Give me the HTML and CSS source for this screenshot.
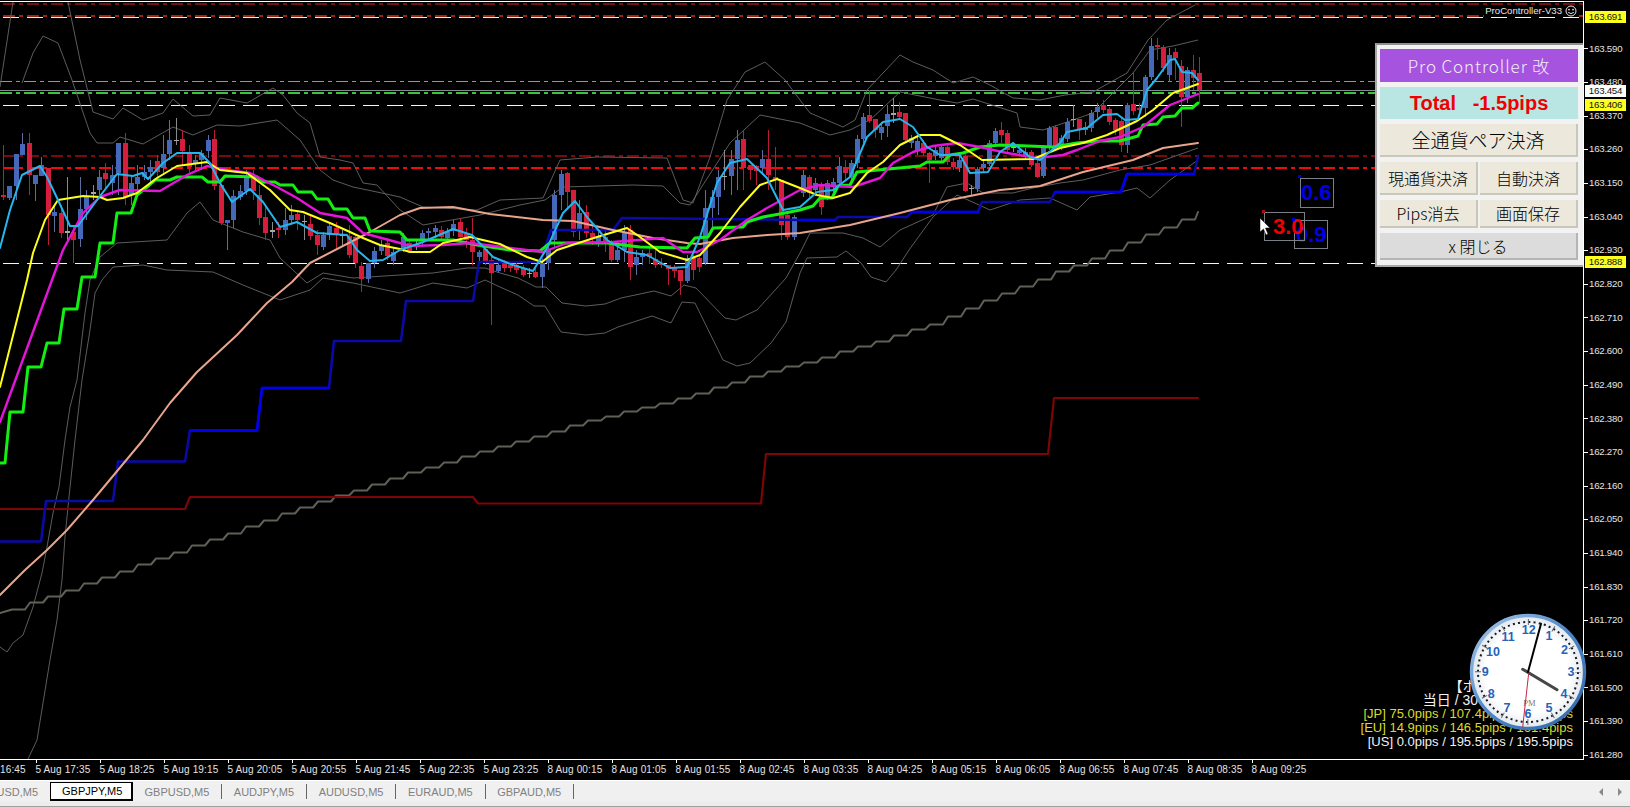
FILE: index.html
```html
<!DOCTYPE html>
<html lang="ja">
<head>
<meta charset="utf-8">
<title>GBPJPY,M5</title>
<link rel="stylesheet" href="styles.css">
</head>
<body>
<div class="terminal">
  <div class="workspace">
    <div class="plot">
      <svg class="chart" viewBox="0 2 1583 757" width="1583" height="757" xmlns="http://www.w3.org/2000/svg">
        <g>
          <line class="lv lv-darkred-top" x1="3" y1="4" x2="1583" y2="4"/>
          <line class="lv lv-red-top" x1="3" y1="16" x2="1583" y2="16"/>
          <line class="lv lv-white" x1="3" y1="17.5" x2="1583" y2="17.5"/>
          <line class="lv lv-palegreen" x1="0" y1="81.5" x2="1583" y2="81.5"/>
          <line class="lv lv-bid" x1="0" y1="90.5" x2="1583" y2="90.5"/>
          <line class="lv lv-green" x1="0" y1="93" x2="1583" y2="93"/>
          <line class="lv lv-white" x1="3" y1="105.5" x2="1583" y2="105.5"/>
          <line class="lv lv-darkred" x1="3" y1="156" x2="1583" y2="156"/>
          <line class="lv lv-red" x1="3" y1="168" x2="1583" y2="168"/>
          <line class="lv lv-white" x1="3" y1="263.5" x2="1583" y2="263.5"/>
        </g>
        <g class="bands">
          <polyline points="0,87 13,2"/>
          <polyline points="68,2 80,60 93,112 113,119 123,108 143,120 163,113 173,99 193,116 210,115 220,98 247,103 273,88 283,95 297,113 310,123 320,157 340,160 353,163 363,183 377,185 400,210 423,225 480,215 520,205 545,200 563,187 633,185 663,186 680,203 690,205 730,143 760,115 800,123 830,135 850,130 870,120 900,92 940,100 957,103 973,99 1017,113 1020,127 1043,130 1067,122 1093,113 1133,73 1150,50 1173,46 1198,40"/>
          <polyline points="22,83 33,53 43,36 58,43 72,80 90,133 97,143 113,143 120,137 143,144 173,127 193,135 217,125 240,126 277,120 300,140 320,170 333,180 353,187 377,192 400,197 423,207 477,210 500,200 543,198 560,160 597,157 667,158 683,200 693,203 710,157 727,100 745,72 765,62 785,80 800,100 810,113 843,127 855,120 867,90 900,55 913,62 933,70 953,83 973,77 990,85 1013,98 1040,100 1065,95 1093,92 1127,73 1148,40 1167,20 1195,5"/>
          <polyline points="0,647 7,652 13,643 23,635 33,607 42,573 47,547 53,513 59,487 65,440 70,407 77,380 85,313 90,280 100,257 117,243 167,240 187,213 200,202 213,220 243,232 270,240 280,258 307,283 323,273 353,278 400,275 433,273 467,268 485,268 500,273 518,278 536,287 546,287 562,303 586,306 605,304 621,298 654,291 671,296 684,285 696,288 725,318 736,320 757,310 786,278 800,253 810,233 843,233 863,238 880,247 900,230 933,215 947,187 967,183 983,193 1013,193 1033,188 1060,183 1083,180 1120,170 1150,165 1198,148"/>
          <polyline points="28,759 37,740 43,703 50,660 57,620 62,580 65,537 69,497 75,440 82,380 90,330 95,293 102,280 113,267 143,265 167,270 213,272 243,285 280,300 310,290 323,278 353,283 400,293 433,283 467,288 485,280 500,287 518,295 534,306 545,306 561,332 586,335 605,333 618,327 652,316 671,323 682,302 695,303 723,360 737,366 750,363 771,343 786,322 800,273 807,258 837,257 846,251 861,263 871,277 886,282 896,270 909,250 933,217 957,195 990,210 1020,200 1050,198 1077,210 1090,197 1120,192 1137,188 1150,198 1170,180 1198,160"/>
        </g>
        <g id="candles"></g>
        <polyline id="stairs" class="ma ma-stairs" points=""/>
        <polyline class="ma ma-darkred" points="0,509 185,509 190,497 473,497 478,503.5 761,503.5 766,454 1048,454 1054,398 1198,398"/>
        <polyline class="ma ma-blue" points="0,541.5 41,541.5 46,501 113,501 118,461.5 185,461.5 190,430.5 257,430.5 262,388 329,388 334,341 401,341 406,301 473,301 479,262 540,262 551,230 613,230 622,218 800,220 835,220 838,217 907,217 912,212 978,212 982,202 1050,202 1055,192 1121,192 1127,174 1194,174 1198,157"/>
        <polyline class="ma ma-blue-bright" points="190,430.5 257,430.5 262,388 329,388"/>
        <polyline class="ma ma-blue-bright" points="800,220 835,220"/>
        <polyline class="ma ma-blue-bright" points="912,212 978,212"/>
        <polyline class="ma ma-blue-bright" points="1055,192 1121,192 1127,174 1194,174"/>
        <polyline class="ma ma-peach" points="0,595 25,570 47,550 67,530 93,500 118,470 143,440 170,403 197,372 237,335 267,303 292,282 310,263 370,232 400,215 420,208 453,207 490,214 543,220 573,221 613,230 653,238 687,243 700,244 733,238 767,235 800,233 850,225 900,213 950,200 1000,190 1040,186 1083,172 1133,160 1163,148 1198,143"/>
        <polyline class="ma ma-lime" points="0,463 5,463 10,412 23,412 28,367 41,367 47,343 59,343 64,309 77,309 82,277 95,277 100,243 113,243 117,213 131,213 137,195 147,187 155,180 170,180 177,177 202,177 208,182 220,182 225,176 257,177 263,182 275,182 280,185 293,185 298,192 312,192 317,199 328,199 334,209 347,209 353,218 365,218 370,231 400,232 407,240 453,240 477,245 510,250 540,251 550,243 590,243 607,243 640,247 687,248 695,238 708,237 713,228 743,227 747,222 763,217 785,213 800,210 813,206 820,198 832,198 838,186 850,185 857,172 920,166 927,162 943,162 950,155 963,153 980,147 1000,145 1053,147 1077,143 1100,141 1120,141 1138,136 1143,125 1157,124 1163,117 1175,116 1182,108 1192,108 1198,103"/>
        <polyline class="ma ma-magenta" points="0,422 52,280 63,250 83,213 100,197 120,190 160,191 187,175 207,166 227,170 250,173 277,187 297,198 320,213 347,218 363,233 400,243 410,246 443,245 470,243 503,247 543,252 567,243 613,242 663,238 683,252 697,252 720,240 747,220 767,208 800,190 820,185 853,187 880,178 893,163 913,152 933,146 957,143 980,147 1007,153 1037,158 1063,155 1077,150 1100,141 1120,137 1143,127 1170,105 1198,94"/>
        <polyline class="ma ma-yellow" points="0,387 27,280 33,253 45,220 58,200 83,196 100,197 107,200 123,198 137,193 157,178 177,166 207,162 220,170 247,173 270,190 290,210 303,212 330,223 350,232 363,238 380,245 400,249 410,252 430,252 443,243 470,237 500,244 527,257 542,262 557,250 597,237 627,228 640,237 660,252 687,260 700,255 720,233 740,207 760,185 777,179 800,188 817,195 833,198 850,193 867,173 883,162 900,145 920,135 940,135 960,145 982,160 1033,159 1060,148 1083,143 1107,135 1137,121 1153,110 1173,93 1187,88 1198,84"/>
        <polyline class="ma ma-cyan" points="0,248 10,210 22,175 40,166 47,177 58,200 70,226 78,226 97,200 117,174 133,176 142,173 148,179 163,163 177,153 200,153 210,163 220,183 232,202 250,189 263,202 280,227 297,222 317,233 347,235 357,250 370,261 383,260 400,250 423,242 453,229 472,235 493,257 513,265 533,271 547,248 563,213 575,201 587,217 607,240 627,252 647,255 670,268 687,267 700,237 717,183 730,163 747,159 767,178 783,210 800,207 817,192 833,190 850,177 867,137 883,122 900,119 913,127 927,147 940,155 960,155 970,173 988,172 1000,152 1013,143 1030,157 1040,160 1060,143 1067,132 1087,128 1103,115 1117,114 1125,120 1138,119 1147,90 1157,78 1170,60 1175,59 1182,72 1192,73 1198,80"/>
        <g class="objects">
          <rect class="obj-box" x="1294.5" y="220.5" width="33" height="28"/>
          <rect class="obj-box" x="1300.5" y="178.5" width="33" height="29"/>
          <text class="obj-blue" x="1301" y="200">0.6</text>
          <text class="obj-blue" x="1296" y="242">0.9</text>
          <rect class="obj-box" x="1264.5" y="212.5" width="40" height="28"/>
          <text class="obj-red" x="1273" y="234">3.0</text>
          <rect class="obj-dot-blue" x="1298" y="175" width="3" height="3"/>
          <rect class="obj-dot-blue" x="1292" y="218" width="3" height="3"/>
          <rect class="obj-dot-red" x="1262" y="210" width="3" height="3"/>
          <polygon class="cursor" points="1260,218 1260,232 1263.5,229 1266,235 1268,234 1265.5,228 1270,228"/>
        </g>
      </svg>

      <div class="ea-badge">
        <span>ProController-V33</span>
        <svg class="smiley" viewBox="0 0 12 12" width="12" height="12" xmlns="http://www.w3.org/2000/svg">
          <circle cx="6" cy="6" r="5" fill="none" stroke="#e6e6e6"/>
          <circle cx="4" cy="4.6" r="0.9" fill="#e6e6e6"/>
          <circle cx="8" cy="4.6" r="0.9" fill="#e6e6e6"/>
          <path d="M3.2 7.4 Q6 9.8 8.8 7.4" fill="none" stroke="#e6e6e6"/>
        </svg>
      </div>

      <div class="panel">
        <div class="panel-title">Pro Controller 改</div>
        <div class="panel-total">Total&nbsp;&nbsp;&nbsp;-1.5pips</div>
        <div class="btn btn-large">全通貨ペア決済</div>
        <div class="btn-row">
          <div class="btn">現通貨決済</div>
          <div class="btn">自動決済</div>
        </div>
        <div class="btn-row">
          <div class="btn">Pips消去</div>
          <div class="btn">画面保存</div>
        </div>
        <div class="btn btn-close">x 閉じる</div>
      </div>

      <div class="vol-stats">
        <div class="vol-cjk">【ボラティリティ】</div>
        <div class="vol-cjk vol-head">当日 / 30</div>
        <div class="vol-yellow">[JP] 75.0pips / 107.4pips / 182.4pips</div>
        <div class="vol-yellow">[EU] 14.9pips / 146.5pips / 161.4pips</div>
        <div>[US] 0.0pips / 195.5pips / 195.5pips</div>
      </div>

      <svg class="clock" viewBox="-59 -59 118 118" width="118" height="118" xmlns="http://www.w3.org/2000/svg">
        <defs>
          <radialGradient id="face" cx="50%" cy="50%" r="50%">
            <stop offset="0.75" stop-color="#ffffff"/>
            <stop offset="1" stop-color="#dfe6ee"/>
          </radialGradient>
          <linearGradient id="ring" x1="0" y1="0" x2="1" y2="1">
            <stop offset="0" stop-color="#a9c9ec"/>
            <stop offset="0.5" stop-color="#4d86c6"/>
            <stop offset="1" stop-color="#2f67aa"/>
          </linearGradient>
        </defs>
        <circle class="clock-face" r="56.5"/>
        <circle class="clock-dots" r="50"/>
        <circle class="clock-hours" r="50"/>
        <g class="clock-nums">
          <text x="0.7" y="-41.7">12</text><text x="21" y="-36">1</text><text x="36.5" y="-21.7">2</text>
          <text x="43" y="0">3</text><text x="36" y="21.7">4</text><text x="21" y="35.7">5</text>
          <text x="0" y="41.7">6</text><text x="-21" y="35.7">7</text><text x="-36.7" y="21.7">8</text>
          <text x="-42.7" y="0">9</text><text x="-35" y="-19.7">10</text><text x="-20" y="-35">11</text>
        </g>
        <text class="clock-pm" x="1.3" y="34">PM</text>
        <line class="hand-hour" x1="-5.3" y1="-2.7" x2="29" y2="17.7"/>
        <line class="hand-minute" x1="0" y1="0" x2="13" y2="-48.3"/>
        <line class="hand-second" x1="0.7" y1="1" x2="-5.3" y2="55"/>
      </svg>
    </div>

    <div class="price-axis">
      <div class="price">163.590</div><div class="price">163.480</div><div class="price">163.370</div>
      <div class="price">163.260</div><div class="price">163.150</div><div class="price">163.040</div>
      <div class="price">162.930</div><div class="price">162.820</div><div class="price">162.710</div>
      <div class="price">162.600</div><div class="price">162.490</div><div class="price">162.380</div>
      <div class="price">162.270</div><div class="price">162.160</div><div class="price">162.050</div>
      <div class="price">161.940</div><div class="price">161.830</div><div class="price">161.720</div>
      <div class="price">161.610</div><div class="price">161.500</div><div class="price">161.390</div>
      <div class="price">161.280</div>
      <div class="tag tag-yellow tag-a">163.691</div>
      <div class="tag tag-white tag-b">163.454</div>
      <div class="tag tag-yellow tag-c">163.406</div>
      <div class="tag tag-yellow tag-d">162.888</div>
    </div>
  </div>

  <div class="time-axis">
    <div class="time time-first">16:45</div><div class="time">5 Aug 17:35</div><div class="time">5 Aug 18:25</div>
    <div class="time">5 Aug 19:15</div><div class="time">5 Aug 20:05</div><div class="time">5 Aug 20:55</div>
    <div class="time">5 Aug 21:45</div><div class="time">5 Aug 22:35</div><div class="time">5 Aug 23:25</div>
    <div class="time">8 Aug 00:15</div><div class="time">8 Aug 01:05</div><div class="time">8 Aug 01:55</div>
    <div class="time">8 Aug 02:45</div><div class="time">8 Aug 03:35</div><div class="time">8 Aug 04:25</div>
    <div class="time">8 Aug 05:15</div><div class="time">8 Aug 06:05</div><div class="time">8 Aug 06:55</div>
    <div class="time">8 Aug 07:45</div><div class="time">8 Aug 08:35</div><div class="time">8 Aug 09:25</div>
  </div>

  <div class="tabs">
    <div class="tab tab-clipped">USD,M5</div>
    <div class="tab tab-active">GBPJPY,M5</div>
    <div class="tab">GBPUSD,M5</div>
    <div class="tab">AUDJPY,M5</div>
    <div class="tab">AUDUSD,M5</div>
    <div class="tab">EURAUD,M5</div>
    <div class="tab">GBPAUD,M5</div>
    <div class="tab-scroll">
      <span class="arrow arrow-left"></span>
      <span class="arrow arrow-right"></span>
    </div>
  </div>
  <div class="statusbar"></div>
</div>
<script src="chart.js"></script>
</body>
</html>
```

FILE: styles.css
```css
html, body {
  margin: 0;
  padding: 0;
  background: #000;
  overflow: hidden;
}
.terminal {
  width: 1630px;
  height: 807px;
  display: flex;
  flex-direction: column;
  font-family: "Liberation Sans", Arial, sans-serif;
}
.workspace {
  display: flex;
  height: 760px;
  padding-top: 1px;
  box-sizing: border-box;
}
.plot {
  position: relative;
  z-index: 1;
  width: 1583px;
  height: 757px;
  border-top: 1px solid #fff;
  border-right: 1px solid #fff;
  border-bottom: 1px solid #fff;
}
.chart { display: block; overflow: hidden; }

/* level lines */
.lv { fill: none; }
.lv-white { stroke: #f4f4f4; stroke-width: 1; stroke-dasharray: 16 8; }
.lv-red-top { stroke: #d4301a; stroke-width: 1.6; stroke-dasharray: 12 4 4 4; }
.lv-darkred-top { stroke: #a01212; stroke-width: 1.5; stroke-dasharray: 12 4 4 4; }
.lv-palegreen { stroke: #7fa37f; stroke-width: 1; stroke-dasharray: 12 4 4 4; }
.lv-bid { stroke: #808a92; stroke-width: 1; }
.lv-green { stroke: #37c437; stroke-width: 2; stroke-dasharray: 12 4 4 4; }
.lv-darkred { stroke: #7c0a0a; stroke-width: 2; stroke-dasharray: 12 4 4 4; }
.lv-red { stroke: #f00c0c; stroke-width: 2; stroke-dasharray: 12 4 4 4; }

/* bands + moving averages */
.bands polyline { fill: none; stroke: #666; stroke-width: 0.9; stroke-linejoin: round; }
.ma { fill: none; stroke-linejoin: round; stroke-linecap: round; }
.ma-stairs { stroke: #5e6156; stroke-width: 2; }
.ma-darkred { stroke: #7d0505; stroke-width: 2.2; }
.ma-blue { stroke: #0a0aa8; stroke-width: 2.5; }
.ma-blue-bright { stroke: #0000ee; stroke-width: 2.5; }
.ma-peach { stroke: #e8a58c; stroke-width: 2; }
.ma-lime { stroke: #12f012; stroke-width: 3; }
.ma-magenta { stroke: #e414d8; stroke-width: 2.4; }
.ma-yellow { stroke: #ffff1a; stroke-width: 2; }
.ma-cyan { stroke: #25b6ee; stroke-width: 2; }

/* candles */
.wick { stroke-width: 1; }
.wick-r { stroke: #b81c38; }
.wick-b { stroke: #5d6f9c; }
.wick-g { stroke: #8a8a8a; }
.body-r { fill: #d41e3c; }
.body-b { fill: #4568b8; }
.body-g { fill: #a8a8a8; }

/* chart objects */
.obj-box { fill: none; stroke: #7b7f86; stroke-width: 1; }
.obj-blue, .obj-red {
  font-family: "Liberation Sans", Arial, sans-serif;
  font-size: 22px;
  font-weight: 700;
}
.obj-blue { fill: #0000e6; }
.obj-red { fill: #f00000; }
.obj-dot-blue { fill: #0000d0; }
.obj-dot-red { fill: #a01010; }
.cursor { fill: #fff; stroke: #000; stroke-width: 0.5; }

/* corner badge */
.ea-badge {
  position: absolute;
  top: 3px;
  right: 6px;
  display: flex;
  align-items: center;
  gap: 3px;
  color: #e6e6e6;
  font-size: 9.6px;
  line-height: 12px;
  background: #000;
  padding-left: 1px;
}

/* controller panel */
.panel {
  position: absolute;
  top: 41px;
  left: 1375px;
  width: 208px;
  height: 224px;
  box-sizing: border-box;
  padding: 4px 5px 5px 3px;
  display: grid;
  grid-template-rows: 33px 32px 33px 33px 28px 27px;
  gap: 5px;
  background: #f2f2f2;
  border-top: 2px solid #8f8f8f;
  border-left: 2px solid #a8a8a8;
  border-bottom: 2px solid #a8a8a8;
  font-family: "Noto Sans CJK JP", "Liberation Sans", sans-serif;
  color: #000;
}
.panel-title, .panel-total, .btn {
  display: flex;
  align-items: center;
  justify-content: center;
  min-width: 0;
  white-space: nowrap;
}
.panel-title {
  background: #a653df;
  color: #f2ecf8;
  font-size: 17px;
  font-weight: 300;
  letter-spacing: 0.9px;
}
.panel-total {
  background: #b9e6e3;
  color: #f00000;
  font-family: "Liberation Sans", Arial, sans-serif;
  font-size: 20px;
  font-weight: 700;
}
.btn {
  background: #ece9dc;
  border-right: 2px solid #c9c7ba;
  border-bottom: 2px solid #c9c7ba;
  font-size: 16px;
  font-weight: 300;
}
.btn-large { font-size: 19px; }
.btn-close { background: #dcdcdc; border-color: #b5b5b5; }
.btn-row {
  display: grid;
  grid-template-columns: 98px 98px;
  gap: 2px;
}

/* volatility text */
.vol-stats {
  position: absolute;
  right: 10px;
  bottom: 10px;
  color: #f2f2f2;
  font-family: "Liberation Sans", "Noto Sans CJK JP", sans-serif;
  font-size: 13px;
  line-height: 14px;
  text-align: right;
  white-space: nowrap;
}
.vol-cjk { font-size: 14px; }
.vol-head { padding-right: 95px; }
.vol-yellow { color: #d9dc2a; }

/* analog clock */
.clock {
  position: absolute;
  right: -4px;
  bottom: 28px;
  overflow: visible;
}
.clock-face { fill: url(#face); stroke: url(#ring); stroke-width: 3.4; }
.clock-dots { fill: none; stroke: #1a1a1a; stroke-width: 2; stroke-dasharray: 2 3.236; }
.clock-hours { fill: none; stroke: #666; stroke-width: 6; stroke-dasharray: 1 25.18; stroke-dashoffset: 0.5; }
.clock-nums text {
  fill: #2563b8;
  font-family: "Liberation Sans", Arial, sans-serif;
  font-size: 12.5px;
  font-weight: 700;
  text-anchor: middle;
  dominant-baseline: central;
}
.clock-pm {
  fill: #7a7a7a;
  font-family: "Liberation Serif", serif;
  font-size: 8.5px;
  text-anchor: middle;
}
.hand-hour { stroke: #474747; stroke-width: 3; stroke-linecap: round; }
.hand-minute { stroke: #000; stroke-width: 2; stroke-linecap: round; }
.hand-second { stroke: #c8244a; stroke-width: 1; }

/* price axis */
.price-axis {
  position: relative;
  flex: 1;
  padding-top: 30.5px;
  box-sizing: border-box;
}
.price {
  position: relative;
  height: 33.65px;
  line-height: 33.65px;
  padding-left: 5px;
  color: #e4e4e4;
  font-size: 9.7px;
  letter-spacing: -0.25px;
}
.price::before {
  content: "";
  position: absolute;
  left: 0;
  top: 50%;
  width: 4px;
  height: 1px;
  background: #fff;
}
.tag {
  position: absolute;
  left: 1px;
  width: 41px;
  height: 12px;
  line-height: 12px;
  font-size: 9.7px;
  letter-spacing: -0.25px;
  color: #111;
  text-align: center;
}
.tag-yellow { background: #ffff1e; }
.tag-white { background: #fff; }
.tag-a { top: 10px; }
.tag-b { top: 84px; }
.tag-c { top: 98px; }
.tag-d { top: 255px; }

/* time axis */
.time-axis {
  display: flex;
  height: 20px;
  overflow: hidden;
  color: #e4e4e4;
  font-size: 10px;
  flex-shrink: 0;
}
.time {
  position: relative;
  flex: 0 0 64px;
  line-height: 19px;
  letter-spacing: 0.15px;
  white-space: nowrap;
}
.time::before {
  content: "";
  position: absolute;
  left: 1px;
  top: 0;
  width: 1px;
  height: 3px;
  background: #fff;
}
.time-first { flex-basis: 35.4px; }
.time-first::before { display: none; }

/* symbol tabs */
.tabs {
  display: flex;
  height: 21px;
  align-items: center;
  background: #f0f0f0;
  border-top: 1px solid #fff;
  color: #808080;
  font-size: 11px;
  flex-shrink: 0;
}
.tab {
  display: flex;
  align-items: center;
  height: 15px;
  padding: 0 12px 0 11.5px;
  border-right: 1px solid #666;
  white-space: nowrap;
}
.tab-clipped {
  width: 50px;
  box-sizing: border-box;
  justify-content: flex-end;
  overflow: hidden;
  border-right: none;
  padding: 0 12px 0 0;
}
.tab-active {
  height: 19px;
  box-sizing: border-box;
  width: 83px;
  padding: 0 0 0 11px;
  background: #fff;
  color: #000;
  border: 1px solid #000;
  border-bottom-width: 2px;
  border-right-width: 2px;
}
.tab-scroll {
  margin-left: auto;
  display: flex;
  gap: 15px;
  padding-right: 8px;
}
.arrow {
  width: 0;
  height: 0;
  border-top: 4px solid transparent;
  border-bottom: 4px solid transparent;
}
.arrow-left { border-right: 4px solid #8a8a8a; }
.arrow-right { border-left: 4px solid #8a8a8a; }
.statusbar {
  height: 5px;
  box-sizing: border-box;
  background: #ececec;
  border-bottom: 1px solid #a0a0a0;
  flex-shrink: 0;
}
```

FILE: chart.js
```js
// Candle data in screen pixels: [type, bodyTop, bodyBottom, wickTop, wickBottom]
var segments = [
  { x: 3, step: 6.4, bars: [
    ['r',195,197,145,200],['b',186,198,186,200],['b',154,186,154,200],['b',144,155,133,155],['r',143,175,133,195],
    ['b',175,184,175,201],['b',165,176,157,176],['r',168,215,168,245],['b',212,216,205,232],['r',213,233,205,238],
    ['g',231,233,177,240],['r',232,240,225,263],['b',209,239,177,247],['b',197,209,190,220],['g',192,194,185,200],
    ['b',177,190,170,195],['r',173,179,163,190],['b',175,183,165,195],['b',143,173,143,195],['r',143,197,133,205],
    ['b',183,195,175,205],['b',177,184,165,195],['b',172,177,165,180],['b',167,172,160,185],['r',161,172,155,178],
    ['b',154,168,135,175],['b',140,154,120,160],['g',140,141,118,145],['r',139,151,130,165],['r',153,167,145,175],
    ['b',160,163,155,170],['b',153,160,150,170],['b',140,151,135,158],['r',139,186,130,190],['r',185,223,185,225],
    ['b',220,223,220,250],['b',196,220,190,228],['b',191,197,185,200],['b',177,191,170,195],['r',177,191,170,200],
    ['r',195,218,185,225],['r',217,233,205,240],['g',230,232,222,238],['r',228,230,222,238],['b',220,230,208,235],
    ['b',215,220,205,225],['r',214,220,210,230],['g',221,222,215,240],['r',224,236,215,240],['r',235,245,230,255],
    ['b',235,247,232,250],['b',226,235,222,240],['r',228,235,222,248],['g',234,236,230,245],['r',236,255,225,258],
    ['r',237,263,235,268],['r',266,279,262,292],['b',263,279,263,283],['b',251,263,247,268],['b',245,251,240,255],
    ['r',243,256,238,260],['b',252,261,248,265]
  ]},
  { x: 403, step: 6.3, bars: [
    ['b',237,249,233,252],['r',243,251,240,253],['g',244,246,240,250],['b',233,240,230,245],['b',231,233,228,240],
    ['b',228,232,225,238],['r',230,237,226,240],['b',232,238,228,242],['b',224,231,220,236],['r',222,237,218,245],
    ['r',233,240,228,248],['r',240,252,218,265],['b',252,257,250,262],['r',249,262,245,265],['r',260,273,255,325],
    ['b',265,271,260,273],['r',263,268,260,272],['r',265,268,262,272],['r',265,270,262,273],['r',268,275,265,277],
    ['g',273,274,268,278],['r',272,277,268,278],['b',263,277,258,288],['b',250,263,245,270],['b',195,240,190,248],
    ['b',174,195,170,210],['r',173,192,172,210],['r',190,232,190,237],['b',213,230,200,240],['r',212,233,205,238],
    ['r',233,238,225,245],['b',237,242,232,247],['r',237,242,230,252],['r',243,260,240,262],['b',250,260,245,262],
    ['b',232,250,225,262],['r',230,267,225,280],['b',257,265,250,275],['b',253,257,250,265],['r',253,257,248,264],
    ['r',259,265,250,268],['r',263,265,258,268],['r',265,269,265,285],['r',267,271,265,278],['r',270,281,270,295],
    ['b',258,281,255,283],['r',258,270,255,280],['r',258,267,255,272],['b',208,263,190,265],['b',197,208,190,230],
    ['b',177,197,170,215],['g',176,177,150,190],['b',159,176,150,195],['b',140,159,130,190],['r',139,168,130,190],
    ['r',165,170,165,180],['r',166,171,165,185],['b',159,168,150,175],['r',159,175,130,190],['r',177,179,147,190],
    ['r',180,225,180,240],['r',215,237,212,240],['b',217,237,215,240]
  ]},
  { x: 803, step: 6.0, bars: [
    ['b',175,193,170,197],['r',177,193,175,197],['b',183,190,178,196],['r',185,207,182,215],['b',183,197,180,200],
    ['b',182,187,178,192],['b',166,183,157,186],['r',167,173,160,180],['b',163,177,160,180],['b',139,163,135,168],
    ['b',117,139,113,143],['r',115,121,90,123],['r',119,130,119,138],['b',127,133,122,140],['b',114,126,105,137],
    ['g',113,115,98,123],['r',112,117,102,120],['r',113,140,113,141],['b',138,143,135,148],['b',141,151,137,155],
    ['r',143,153,140,156],['r',153,160,152,183],['b',150,156,145,160],['b',147,158,144,162],['r',147,162,144,165],
    ['r',162,167,158,170],['b',160,168,156,172],['r',156,191,154,192],['g',188,189,185,195],['b',169,189,167,192],
    ['b',164,168,160,172],['b',143,164,140,166],['b',131,143,128,146],['r',130,135,122,143],['r',133,150,130,152],
    ['g',146,148,142,152],['b',150,153,147,156],['b',152,157,148,160],['r',152,165,150,167],['r',163,177,160,178],
    ['b',147,176,145,178],['b',128,147,126,150],['r',127,147,125,150],['b',138,147,135,150],['b',122,139,118,142],
    ['g',119,120,105,127],['r',119,130,119,140],['b',127,130,122,135],['b',113,128,110,132],['b',107,112,103,118],
    ['r',105,110,100,113],['r',109,122,107,125],['r',120,130,118,135],['r',121,145,118,152],['b',105,145,103,153],
    ['r',104,111,73,115],['r',108,110,103,115],['b',77,108,75,117],['b',46,77,38,80],['r',45,47,38,60],
    ['r',47,68,45,72],['b',55,75,48,82],['r',52,58,48,80],['r',66,97,60,127],['b',70,97,67,103],['r',70,78,55,90],
    ['r',73,90,57,103]
  ]}
];

var SVG_NS = 'http://www.w3.org/2000/svg';
var group = document.getElementById('candles');

segments.forEach(function (seg) {
  seg.bars.forEach(function (bar, i) {
    var x = Math.round(seg.x + seg.step * i);
    var wick = document.createElementNS(SVG_NS, 'line');
    wick.setAttribute('class', 'wick wick-' + bar[0]);
    wick.setAttribute('x1', x + 0.5);
    wick.setAttribute('x2', x + 0.5);
    wick.setAttribute('y1', bar[3]);
    wick.setAttribute('y2', bar[4]);
    group.appendChild(wick);

    var body = document.createElementNS(SVG_NS, 'rect');
    body.setAttribute('class', 'body-' + bar[0]);
    body.setAttribute('x', x - 2);
    body.setAttribute('y', bar[1]);
    body.setAttribute('width', 5);
    body.setAttribute('height', Math.max(1, bar[2] - bar[1]));
    group.appendChild(body);
  });
});

// Stepped long-term average: a small riser every 18px along the anchor curve
var anchors = [[0,613],[102,577],[210,539],[300,507],[408,472],[515,441],[589,420],[679,398],[750,376],[821,357],[875,341],[929,324],[982,301],[1057,271],[1087,260],[1198,212]];
function curveY(x) {
  for (var k = 1; k < anchors.length; k++) {
    if (x <= anchors[k][0]) {
      var a = anchors[k - 1], b = anchors[k];
      return a[1] + (b[1] - a[1]) * (x - a[0]) / (b[0] - a[0]);
    }
  }
  return anchors[anchors.length - 1][1];
}
var pts = ['0,613'];
for (var sx = 12; sx < 1198; sx += 18) {
  var sy = Math.round(curveY(sx)) + 0.5;
  pts.push(sx + ',' + sy, Math.min(sx + 13, 1198) + ',' + sy);
}
pts.push('1198,212');
document.getElementById('stairs').setAttribute('points', pts.join(' '));
```
